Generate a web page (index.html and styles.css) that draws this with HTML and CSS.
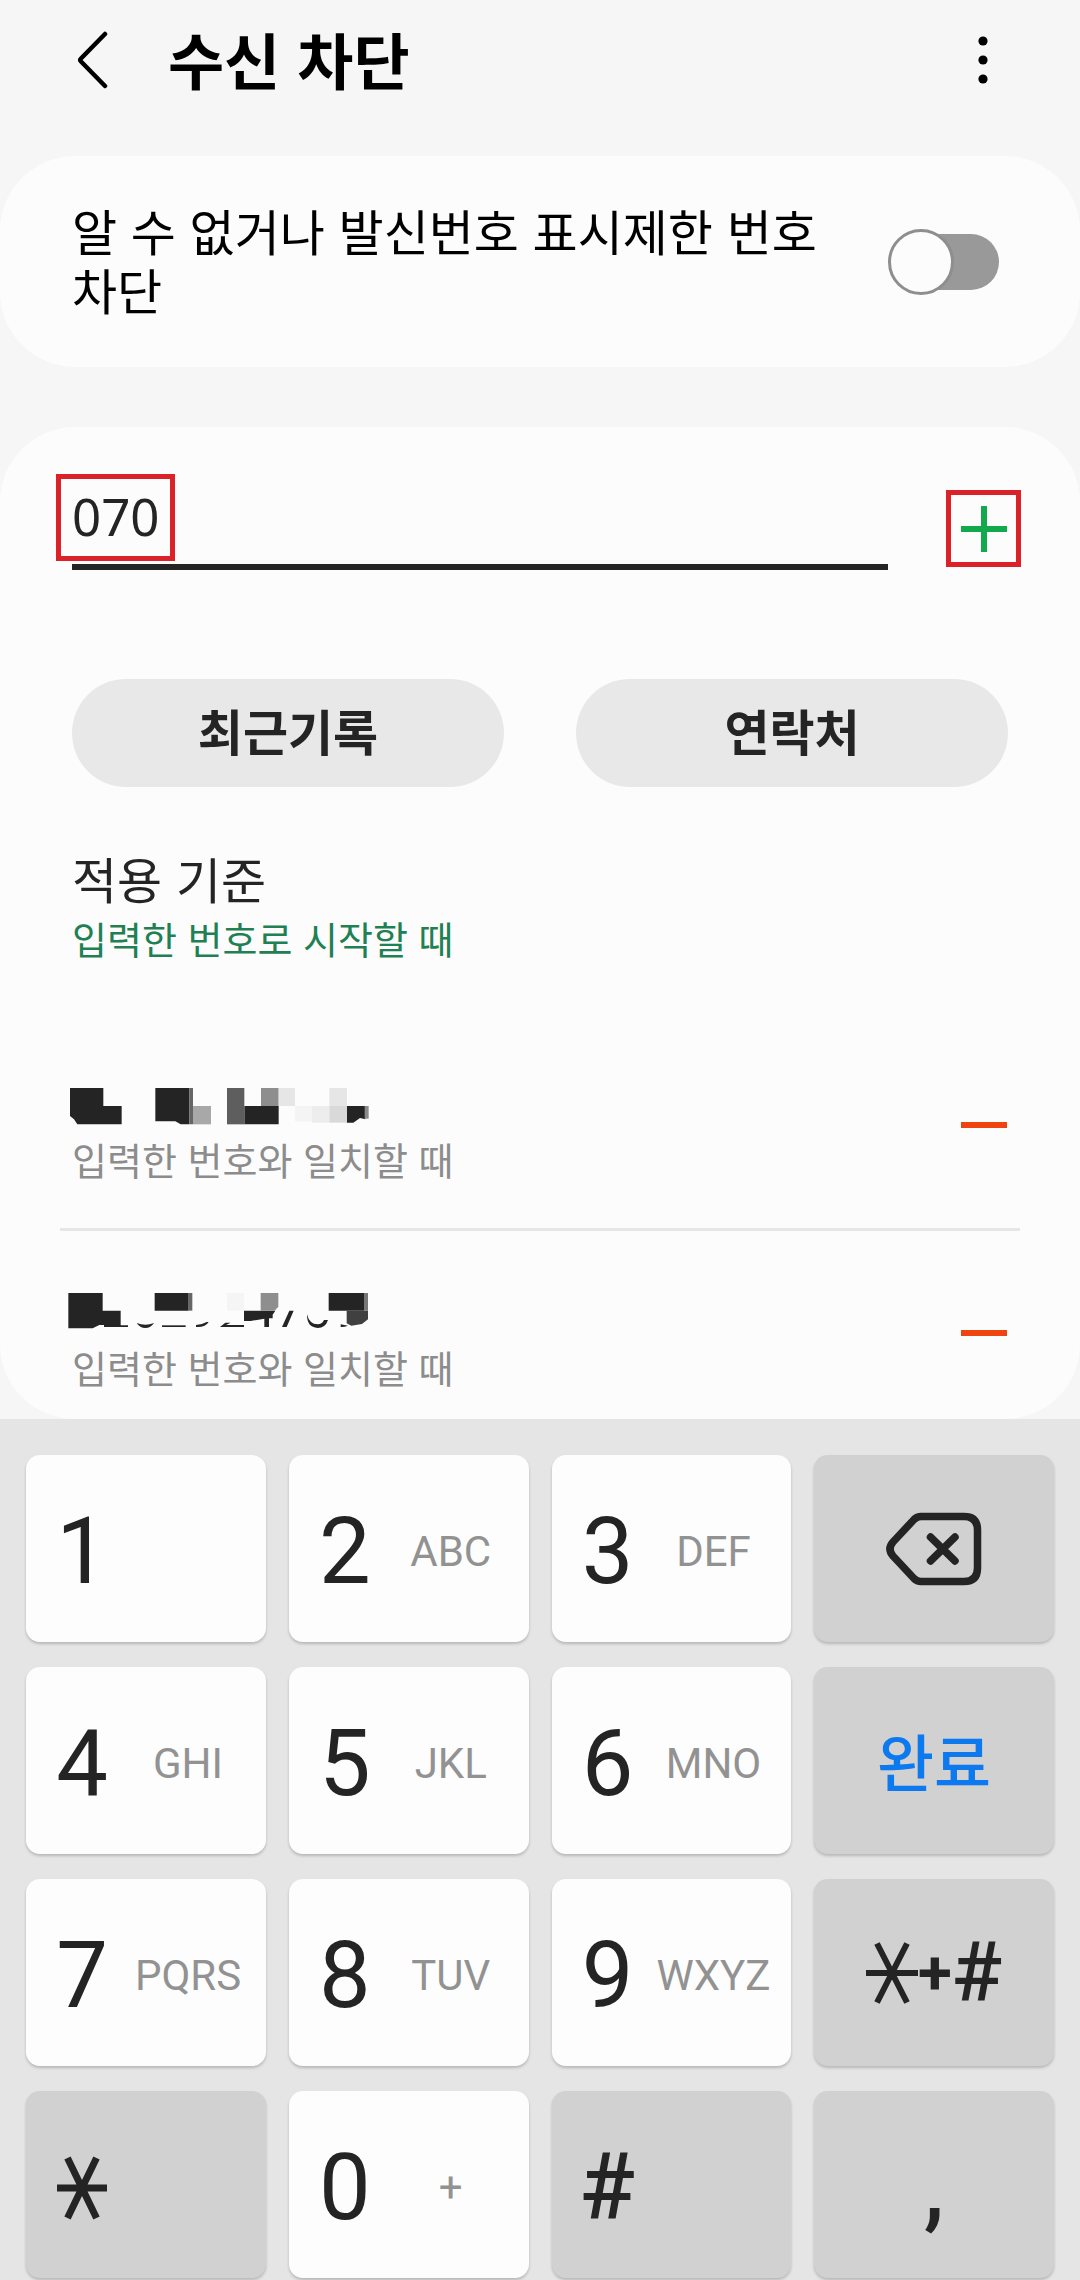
FILE: index.html
```html
<!DOCTYPE html>
<html lang="ko">
<head>
<meta charset="utf-8">
<meta name="viewport" content="width=device-width, initial-scale=1">
<title>수신 차단</title>
<link rel="stylesheet" href="styles.css">
</head>
<body>
<div class="screen">
  <header class="topbar">
    <button class="icon-button back" type="button" aria-label="뒤로">
      <svg width="32" height="60" viewBox="0 0 32 60"><path d="M29 4 5 28.500Q3.500 30 5 31.500L29 56" fill="none" stroke="#000" stroke-width="4.500" stroke-linecap="round"/></svg>
    </button>
    <h1 class="title">수신 차단</h1>
    <button class="icon-button more" type="button" aria-label="더보기">
      <svg width="10" height="50" viewBox="0 0 10 50"><circle cx="5" cy="6" r="4.600"/><circle cx="5" cy="25" r="4.600"/><circle cx="5" cy="44" r="4.600"/></svg>
    </button>
  </header>

  <main class="content">
    <section class="card toggle-card">
      <label class="toggle-label" for="block-unknown">알 수 없거나 발신번호 표시제한 번호 차단</label>
      <input class="switch" id="block-unknown" type="checkbox" role="switch">
    </section>

    <section class="card list-card">
      <form class="add-form">
        <div class="field">
          <input class="number-input" type="text" inputmode="tel" value="070" aria-label="전화번호">
          <span class="mark mark-number"></span>
        </div>
        <button class="add" type="button" aria-label="추가">
          <svg width="46" height="46" viewBox="0 0 46 46"><path d="M0 23H46M23 0V46" stroke="#12a84c" stroke-width="6"/></svg>
          <span class="mark mark-add"></span>
        </button>
      </form>

      <div class="sources">
        <button class="pill" type="button">최근기록</button>
        <button class="pill" type="button">연락처</button>
      </div>

      <button class="criteria" type="button">
        <span class="criteria-title">적용 기준</span>
        <span class="criteria-value">입력한 번호로 시작할 때</span>
      </button>

      <ul class="blocked">
        <li class="blocked-row">
          <div class="blocked-text">
            <svg class="masked" width="310" height="42" viewBox="96 78 930 126" role="img" aria-label="가려진 번호">
              <g fill="#242424">
                <path d="M90 84H190V138H245V193H112L102 178 90 168Z"/>
                <path d="M346 84H448V193H422L406 184H346Z"/>
                <path d="M613 138H664V138H716V193H613Z"/>
                <path d="M921 138H976V178L960 174 940 188H921Z"/>
              </g>
              <path d="M448 84H459V138H448ZM448 138H459V193H448Z" fill="#666"/>
              <path d="M459 138H513V193H459Z" fill="#a8a8a8"/>
              <path d="M561 84H613V193H561Z" fill="#5e5e5e"/>
              <path d="M663 84H716V138H663Z" fill="#8e8e8e"/>
              <path d="M716 84H765V138H716ZM868 84H921V138H868Z" fill="#e6e6e6"/>
              <path d="M765 138H816V184H765Z" fill="#f4f4f4"/>
              <path d="M816 138H868V188H816Z" fill="#ededed"/>
              <path d="M868 138H921V188H868Z" fill="#d9d9d9"/>
              <path d="M974 138H986V176H974Z" fill="#8a8a8a"/>
            </svg>
            <span class="blocked-rule">입력한 번호와 일치할 때</span>
          </div>
          <button class="remove" type="button" aria-label="삭제">
            <svg width="46" height="6" viewBox="0 0 46 6"><path d="M0 0H46V6H0Z" fill="#ee4410"/></svg>
          </button>
        </li>
        <li class="blocked-row">
          <div class="blocked-text">
            <svg class="masked" width="310" height="42" viewBox="96 702 930 126" role="img" aria-label="가려진 번호">
              <g fill="#242424">
                <path d="M85 699H188V752H242V796H264V801H192V795H178L158 805H85Z"/>
                <path d="M344 699H446V752H344Z"/>
                <path d="M866 699H972V752H866Z"/>
                <path d="M612 752H706L698 764V775H687V801H673V776L632 783H612Z"/>
                <path d="M366 796H437V801H366Z"/>
                <path d="M556 788H572L558 795H612V801H540Z"/>
                <path d="M748 752H761L740 801H726Z"/>
                <path d="M290 789Q316 800 342 789Q332 804 316 804Q300 804 290 789Z"/>
                <path d="M468 801V795Q486 794 500 786H506Q496 803 468 801Z"/>
                <path d="M801 763Q808 793 833 793Q846 793 852 780H864Q856 804 833 804Q800 802 801 763Z"/>
                <path d="M902 793 924 797Q912 802 902 801Z"/>
              </g>
              <path d="M446 699H457V752H446Z" fill="#666"/>
              <path d="M561 699H612V752H561Z" fill="#f5f5f5"/>
              <path d="M662 699H715V740L704 752H662Z" fill="#8e8e8e"/>
              <path d="M972 699H984V752H972Z" fill="#777"/>
              <path d="M920 752H984V778L966 792 934 797 920 790Z" fill="#404040"/>
            </svg>
            <span class="blocked-rule">입력한 번호와 일치할 때</span>
          </div>
          <button class="remove" type="button" aria-label="삭제">
            <svg width="46" height="6" viewBox="0 0 46 6"><path d="M0 0H46V6H0Z" fill="#ee4410"/></svg>
          </button>
        </li>
      </ul>
    </section>
  </main>

  <section class="keypad" aria-label="키패드">
    <button class="key" type="button"><span class="digit">1</span></button>
    <button class="key" type="button"><span class="digit">2</span><span class="letters">ABC</span></button>
    <button class="key" type="button"><span class="digit">3</span><span class="letters">DEF</span></button>
    <button class="key key-dark key-action" type="button" aria-label="지우기">
      <svg width="96" height="74" viewBox="0 0 96 74" fill="none" stroke="#242424" stroke-linecap="round" stroke-linejoin="round">
        <path d="M35 4.500H78Q91.500 4.500 91.500 18V56Q91.500 69.500 78 69.500H35Q31 69.500 28 66.500L7 44Q1 37 7 30L28 7.500Q31 4.500 35 4.500Z" stroke-width="7.500"/>
        <path d="M44.500 25 69 49M69 25 44.500 49" stroke-width="7.500"/>
      </svg>
    </button>
    <button class="key" type="button"><span class="digit">4</span><span class="letters">GHI</span></button>
    <button class="key" type="button"><span class="digit">5</span><span class="letters">JKL</span></button>
    <button class="key" type="button"><span class="digit">6</span><span class="letters">MNO</span></button>
    <button class="key key-dark key-action key-done" type="button">완료</button>
    <button class="key" type="button"><span class="digit">7</span><span class="letters">PQRS</span></button>
    <button class="key" type="button"><span class="digit">8</span><span class="letters">TUV</span></button>
    <button class="key" type="button"><span class="digit">9</span><span class="letters">WXYZ</span></button>
    <button class="key key-dark key-action key-symbols" type="button">
      <svg width="52" height="62" viewBox="0 0 52 62" stroke="#242424" stroke-width="6" role="img" aria-label="별표"><path d="M0 31H52M11 1.500 41 60.500M41 1.500 11 60.500"/></svg>
      <span class="symbol-plus">+</span><span class="symbol-hash">#</span>
    </button>
    <button class="key key-dark" type="button" aria-label="별표">
      <span class="digit"><svg class="star" width="50" height="64" viewBox="0 0 50 64" stroke="#242424" stroke-width="7"><path d="M0 32H50M10.500 2 39.500 62M39.500 2 10.500 62"/></svg></span>
    </button>
    <button class="key" type="button"><span class="digit">0</span><span class="letters">+</span></button>
    <button class="key key-dark" type="button"><span class="digit digit-strong">#</span></button>
    <button class="key key-dark key-action key-comma" type="button"><span class="digit digit-strong">,</span></button>
  </section>
</div>
</body>
</html>
```
FILE: styles.css
```css
*,
*::before {
  box-sizing: border-box;
}

body {
  margin: 0;
  background: #f6f6f6;
  color: #242424;
  font-family: "Noto Sans CJK KR", sans-serif;
}

button,
input {
  margin: 0;
  padding: 0;
  border: 0;
  background: none;
  color: inherit;
  font: inherit;
}

svg {
  display: block;
}

.screen {
  display: flex;
  flex-direction: column;
  min-height: 100vh;
}

.content {
  flex: 1;
}

/* Top bar */
.topbar {
  display: flex;
  align-items: center;
  height: 120px;
  margin-bottom: 36px;
  padding: 0 92px 0 76px;
}

.title {
  flex: 1;
  margin: 0 0 0 60px;
  padding-bottom: 3px;
  color: #000;
  font-size: 61px;
  font-weight: 700;
  line-height: 72px;
}

/* Cards */
.card {
  border-radius: 75px;
  background: #fcfcfc;
}

.toggle-card {
  display: flex;
  align-items: center;
  margin-bottom: 60px;
  padding: 44px 81px 44px 72px;
}

.toggle-label {
  flex: 1;
  margin-right: 24px;
  padding-bottom: 5px;
  color: #000;
  font-size: 49px;
  line-height: 59px;
  word-break: keep-all;
}

.switch {
  position: relative;
  width: 108px;
  height: 56px;
  border-radius: 28px;
  background: #999;
  appearance: none;
}

.switch::before {
  content: "";
  position: absolute;
  top: -5px;
  left: -3px;
  width: 66px;
  height: 66px;
  border: 3px solid #8e8e8e;
  border-radius: 50%;
  background: #fcfcfc;
}

.list-card {
  padding-top: 47px;
}

.add-form {
  display: flex;
  align-items: flex-start;
  padding: 0 59px 0 72px;
}

.field {
  position: relative;
  flex: 1;
}

.number-input {
  display: block;
  width: 100%;
  height: 96px;
  padding-bottom: 6px;
  border-bottom: 6px solid #242424;
  font-family: "Noto Sans", sans-serif;
  font-size: 51px;
  outline: none;
}

.add {
  display: grid;
  position: relative;
  place-items: center;
  width: 75px;
  height: 77px;
  margin: 16px 0 0 58px;
}

/* Red highlight frames laid over the controls */
.mark {
  position: absolute;
  border: 5px solid #dc2229;
  pointer-events: none;
}

.mark-number {
  top: 0;
  left: -16px;
  width: 119px;
  height: 87px;
}

.mark-add {
  inset: 0;
}

.sources {
  display: grid;
  grid-template-columns: 1fr 1fr;
  gap: 72px;
  margin-top: 109px;
  padding: 0 72px;
}

.pill {
  height: 108px;
  padding-bottom: 7px;
  border-radius: 54px;
  background: #e8e8e8;
  font-size: 49px;
  font-weight: 700;
}

.criteria {
  display: block;
  width: 100%;
  margin: 61px 0 56px;
  padding: 0 72px;
  text-align: left;
}

.criteria-title,
.criteria-value {
  display: block;
}

.criteria-title {
  font-size: 49px;
  line-height: 60px;
}

.criteria-value {
  color: #1f8053;
  font-size: 38px;
  line-height: 59px;
}

/* Blocked numbers */
.blocked {
  margin: 0 60px;
  padding: 0;
  list-style: none;
}

.blocked-row {
  display: flex;
  align-items: flex-start;
  justify-content: space-between;
  padding: 63px 13px 43px 12px;
}

.blocked-row + .blocked-row {
  padding-bottom: 26px;
  border-top: 3px solid #e6e6e6;
}

.masked {
  overflow: visible;
}

.blocked-rule {
  display: block;
  margin-top: 4px;
  color: #8c8c8c;
  font-size: 38px;
  line-height: 53px;
}

.remove {
  display: grid;
  place-items: center;
  width: 46px;
  height: 78px;
}

/* Keypad */
.keypad {
  display: grid;
  grid-template-columns: repeat(4, 1fr);
  grid-auto-rows: 187px;
  gap: 25px 23px;
  padding: 36px 26px 2px;
  background: #e5e5e5;
  font-family: Roboto, "Noto Sans CJK KR", sans-serif;
}

.key {
  display: grid;
  grid-template-columns: 112px 100px;
  align-items: center;
  padding-top: 6px;
  border-radius: 14px;
  background: #fdfdfd;
  box-shadow: 0 2px 3px rgba(0, 0, 0, 0.2);
}

.key-dark {
  background: #d1d1d1;
}

.key-action {
  display: flex;
  align-items: center;
  justify-content: center;
  padding-top: 0;
}

.key-comma {
  padding-top: 6px;
}

.digit {
  display: grid;
  place-items: center;
  font-size: 92px;
  line-height: 108px;
}

.digit-strong {
  font-weight: 500;
}

.letters {
  justify-self: center;
  color: #929292;
  font-size: 42px;
  white-space: nowrap;
}

.key-done {
  padding-bottom: 2px;
  color: #0d79ee;
  font-family: "Noto Sans CJK KR", sans-serif;
  font-size: 62px;
  font-weight: 500;
}

.symbol-plus {
  font-size: 62px;
  font-weight: 700;
}

.symbol-hash {
  font-size: 84px;
  font-weight: 500;
}
```
